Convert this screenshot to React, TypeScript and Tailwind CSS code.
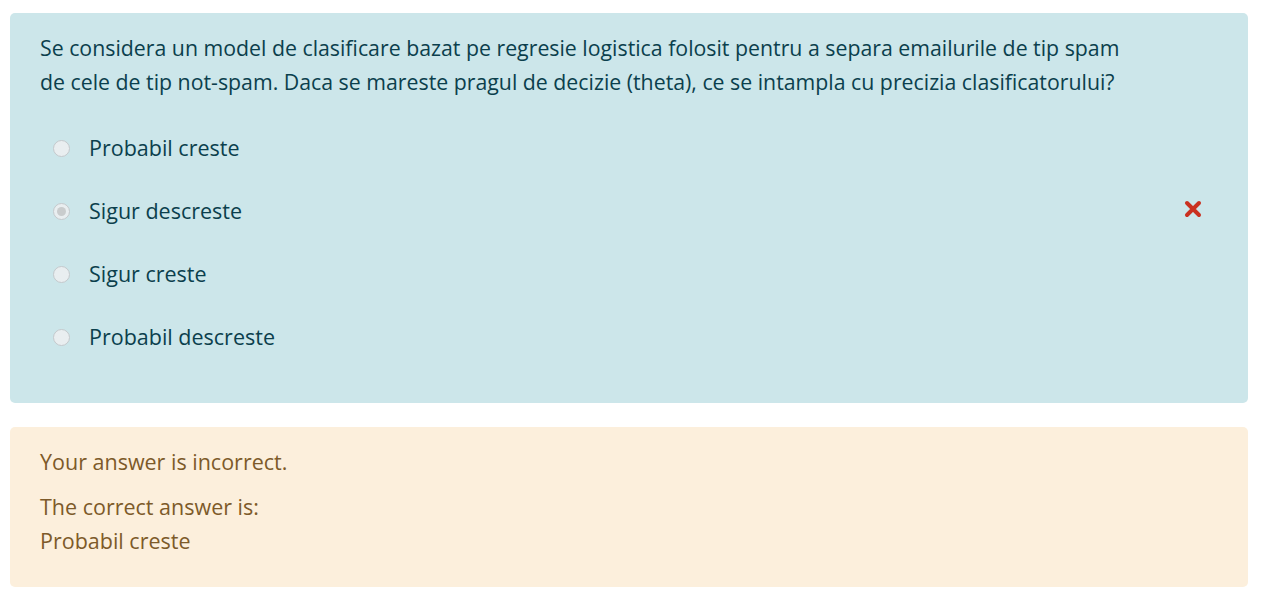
import React from 'react';

const options = [
  { label: 'Probabil creste', checked: false },
  { label: 'Sigur descreste', checked: true },
  { label: 'Sigur creste', checked: false },
  { label: 'Probabil descreste', checked: false },
];

function Radio({ checked }: { checked: boolean }) {
  return (
    <span className="relative flex h-[17px] w-[17px] shrink-0 items-center justify-center rounded-full border border-[#c4c9cc] bg-[#e9eef0]">
      {checked && <span className="h-[9px] w-[9px] rounded-full bg-[#c9cccd]" />}
    </span>
  );
}

export default function App() {
  return (
    <div
      className="min-h-screen bg-white pl-[10px] pr-[13px] pt-[13px]"
      style={{ fontFamily: '"Open Sans", "Noto Sans", sans-serif' }}
    >
      {/* question */}
      <div className="rounded-[5px] bg-[#cce6ea] pl-[30px] pr-[44px] pt-[18px] pb-[34px] text-[#0b3f4d]">
        <p className="whitespace-nowrap text-[21.3px] leading-[34px]">
          Se considera un model de clasificare bazat pe regresie logistica folosit pentru a separa emailurile de tip spam
          <br />
          de cele de tip not-spam. Daca se mareste pragul de decizie (theta), ce se intampla cu precizia clasificatorului?
        </p>
        <div className="mt-[18px] flex flex-col">
          {options.map((o) => (
            <div key={o.label} className="flex h-[63px] items-center">
              <div className="ml-[13px] mr-[19px]">
                <Radio checked={o.checked} />
              </div>
              <span className="flex-1 text-[21.5px]">{o.label}</span>
              {o.checked && (
                <svg width="18" height="18" viewBox="0 0 18 18" className="-mt-[6px] mr-[2px]">
                  <path d="M3 3 L15 15 M15 3 L3 15" stroke="#ca3120" strokeWidth="4" strokeLinecap="round" />
                </svg>
              )}
            </div>
          ))}
        </div>
      </div>

      {/* feedback */}
      <div className="mt-[24px] rounded-[5px] bg-[#fcefdc] px-[30px] pt-[20px] pb-[29px] text-[#7d5a29]">
        <p className="text-[21.5px] leading-[30px]">Your answer is incorrect.</p>
        <p className="mt-[13px] text-[21.5px] leading-[34px]">
          The correct answer is:
          <br />
          Probabil creste
        </p>
      </div>
    </div>
  );
}
